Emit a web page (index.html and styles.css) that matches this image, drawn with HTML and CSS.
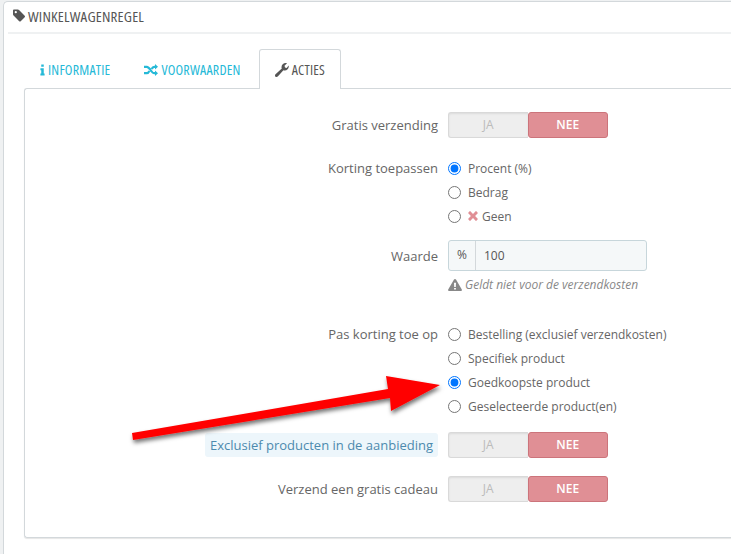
FILE: index.html
```html
<!DOCTYPE html>
<html lang="nl">
  <head>
    <meta charset="UTF-8" />
    <title>Winkelwagenregel</title>
    <link rel="stylesheet" href="styles.css">
  </head>
  <body>
    <div class="panel">
      <h3 class="panel-heading">
        <svg class="icon" viewBox="0 0 14 14"><path fill="#555" d="M0 1.5Q0 .5 1 .5H5.2Q5.9 .5 6.5 1.1L12.6 7.2Q13.4 8 12.6 8.8L8.3 13.1Q7.5 13.9 6.7 13.1L.6 7Q0 6.4 0 5.7ZM3 2.2A1.2 1.2 0 1 0 3 4.6A1.2 1.2 0 1 0 3 2.2Z" fill-rule="evenodd"/></svg>
        <span class="condensed">Winkelwagenregel</span>
      </h3>

      <ul class="tabs">
        <li class="tab">
          <svg class="icon icon-info" viewBox="0 0 6 13"><path fill="#25b9d7" d="M1.5 0H4.5V2.5H1.5ZM.5 4.5H4.5V10.8H5.5V13H.5V10.8H1.5V6.7H.5Z"/></svg>
          <span class="condensed">Informatie</span>
        </li>
        <li class="tab">
          <svg class="icon icon-random" viewBox="0 0 14 12"><path fill="none" stroke="#25b9d7" stroke-width="2.2" d="M0 2.8H2.8C6 2.8 7 9.2 10.2 9.2H11.5M0 9.2H2.8C4 9.2 4.8 8.2 5.4 7M7.6 5C8.2 3.8 9 2.8 10.2 2.8H11.5"/><path fill="#25b9d7" d="M11 0L14 2.8L11 5.6ZM11 6.4L14 9.2L11 12Z"/></svg>
          <span class="condensed">Voorwaarden</span>
        </li>
        <li class="tab active">
          <svg class="icon icon-wrench" viewBox="0 0 14 14"><path fill="#555" d="M13.8 3.2C13.8 5.6 12 7.4 9.7 7.4C9.2 7.4 8.8 7.3 8.4 7.2L3 13.2C2.2 14.1 .9 14.1 .3 13.4C-.3 12.8 -.1 11.6 .8 10.9L6.8 5.6C6.6 5.2 6.5 4.7 6.5 4.2C6.5 1.9 8.4 0 10.7 0C11.1 0 11.6 .1 12 .3L9.5 2.7L10 4.5L11.7 5L13.6 2.4C13.7 2.7 13.8 2.9 13.8 3.2Z"/></svg>
          <span class="condensed">Acties</span>
        </li>
      </ul>

      <div class="tab-content">
        <form class="form">
          <div class="form-row row-switch">
            <label class="form-label">Gratis verzending</label>
            <div class="switch"><span class="switch-off">JA</span><span class="switch-on">NEE</span></div>
          </div>

          <div class="form-row row-radios">
            <label class="form-label">Korting toepassen</label>
            <div class="radios">
              <label class="radio"><input type="radio" name="apply" checked> Procent (%)</label>
              <label class="radio"><input type="radio" name="apply"> Bedrag</label>
              <label class="radio"><input type="radio" name="apply">
                <svg class="icon icon-times" viewBox="0 0 11 11"><path fill="#e08f95" d="M2.6 .3L5.5 3.2L8.4 .3Q8.8 -.1 9.2 .3L10.7 1.8Q11.1 2.2 10.7 2.6L7.8 5.5L10.7 8.4Q11.1 8.8 10.7 9.2L9.2 10.7Q8.8 11.1 8.4 10.7L5.5 7.8L2.6 10.7Q2.2 11.1 1.8 10.7L.3 9.2Q-.1 8.8 .3 8.4L3.2 5.5L.3 2.6Q-.1 2.2 .3 1.8L1.8 .3Q2.2 -.1 2.6 .3Z"/></svg>
                Geen</label>
            </div>
          </div>

          <div class="form-row row-input">
            <label class="form-label">Waarde</label>
            <div class="input-block">
              <div class="input-group"><span class="input-addon">%</span><input class="input" type="text" value="100"></div>
              <p class="help">
                <svg class="icon icon-warning" viewBox="0 0 14 12"><path fill="#888" fill-rule="evenodd" d="M7 0Q7.6 0 8 .6L13.8 10.6Q14.2 11.9 13 12H1Q-.2 11.9 .2 10.6L6 .6Q6.4 0 7 0ZM6 3.8L6.2 8H7.8L8 3.8ZM6.1 9V10.6H7.9V9Z"/></svg>
                Geldt niet voor de verzendkosten
              </p>
            </div>
          </div>

          <div class="form-row row-radios row-apply">
            <label class="form-label">Pas korting toe op</label>
            <div class="radios">
              <label class="radio"><input type="radio" name="target"> Bestelling (exclusief verzendkosten)</label>
              <label class="radio"><input type="radio" name="target"> Specifiek product</label>
              <label class="radio"><input type="radio" name="target" checked> Goedkoopste product</label>
              <label class="radio"><input type="radio" name="target"> Geselecteerde product(en)</label>
            </div>
          </div>

          <div class="form-row row-switch">
            <label class="form-label"><span class="hint">Exclusief producten in de aanbieding</span></label>
            <div class="switch"><span class="switch-off">JA</span><span class="switch-on">NEE</span></div>
          </div>

          <div class="form-row row-switch">
            <label class="form-label">Verzend een gratis cadeau</label>
            <div class="switch"><span class="switch-off">JA</span><span class="switch-on">NEE</span></div>
          </div>
        </form>
      </div>
    </div>

    <!-- Red annotation arrow drawn over the form -->
    <svg class="arrow" viewBox="0 0 731 554">
      <defs>
        <filter id="arrow-shadow" x="-10%" y="-30%" width="120%" height="160%">
          <feDropShadow dx="1" dy="3" stdDeviation="2" flood-color="#000" flood-opacity="0.55"/>
        </filter>
      </defs>
      <path fill="#f00" filter="url(#arrow-shadow)" d="M132 433L388 389L386 376L440 385L391 411L390 398L133 440Z"/>
    </svg>
  </body>
</html>
```

FILE: styles.css
```css
:root {
  --bg-color: #eff1f2;
  --border-color: #d3d8db;
  --text-color: #666;
  --accent-color: #25b9d7;
}
html,
body {
  height: 100%;
}
body {
  margin: 0;
  padding: 1px 0 0 3px;
  box-sizing: border-box;
  position: relative;
  overflow: hidden;
  background: var(--bg-color);
  font-family: "Open Sans", sans-serif;
  font-size: 12px;
  color: var(--text-color);
}
.panel {
  box-sizing: border-box;
  height: 100%;
  padding: 0 0 0 4px;
  background: #fff;
  border: 1px solid var(--border-color);
  border-width: 1px 0 0 1px;
  border-radius: 5px 0 0 0;
}
.condensed {
  font-family: "Open Sans", sans-serif;
  font-stretch: 75%;
  letter-spacing: 0.2px;
  text-transform: uppercase;
}
.panel-heading {
  display: flex;
  align-items: center;
  gap: 2px;
  box-sizing: border-box;
  height: 32px;
  margin: 0;
  padding: 0 0 3px 5px;
  border-bottom: 2px solid var(--bg-color);
  font-size: 15px;
  font-weight: 400;
  color: #555;
}
.icon {
  display: inline-block;
  flex: none;
}
.panel-heading .icon {
  width: 13px;
  height: 13px;
}
.tabs {
  display: flex;
  gap: 2px;
  list-style: none;
  margin: 15px 0 0 16px;
  padding: 0;
  height: 39px;
}
.tab {
  display: flex;
  align-items: center;
  gap: 3px;
  box-sizing: border-box;
  height: 40px;
  padding: 0 15px;
  border: 1px solid transparent;
  border-bottom: 0;
  font-size: 14px;
  color: var(--accent-color);
}
.tab.active {
  position: relative;
  z-index: 1;
  background: #fff;
  border-color: var(--border-color);
  border-radius: 3px 3px 0 0;
  color: #555;
}
.icon-info {
  width: 5px;
  height: 12px;
}
.icon-random {
  width: 14px;
  height: 12px;
}
.icon-wrench {
  width: 14px;
  height: 14px;
}
.tab-content {
  box-sizing: border-box;
  height: 450px;
  margin-left: 16px;
  padding: 23px 0 0;
  border: 1px solid var(--border-color);
  border-right: 0;
  border-radius: 3px 0 0 3px;
  box-shadow: 0 1px 1px rgba(0, 0, 0, 0.1);
}
.form-row {
  display: grid;
  grid-template-columns: 413px 1fr;
  column-gap: 10px;
}
.form-label {
  text-align: right;
  font-size: 13px;
  line-height: 26px;
}
.row-switch {
  height: 26px;
  align-items: center;
  margin-bottom: 18px;
}
.switch {
  display: flex;
  box-sizing: border-box;
  width: 160px;
  height: 26px;
  font-size: 12px;
  line-height: 24px;
  text-align: center;
}
.switch-off,
.switch-on {
  flex: 1;
  box-sizing: border-box;
  border: 1px solid #d9d9d9;
}
.switch-off {
  background: #eee;
  color: #bbb;
  border-radius: 3px 0 0 3px;
  border-right: 0;
  box-shadow: inset 0 1px 2px rgba(0, 0, 0, 0.08);
}
.switch-on {
  background: #e08f95;
  border-color: #cc747b;
  color: #fff;
  font-weight: 600;
  border-radius: 3px;
}
.radios {
  display: flex;
  flex-direction: column;
}
.radio {
  display: flex;
  align-items: center;
  gap: 7px;
  height: 24px;
  font-size: 12px;
}
.radio input {
  flex: none;
  width: 13px;
  height: 13px;
  margin: 0;
}
.radio .icon-times {
  width: 10px;
  height: 10px;
  margin-right: -3px;
}
.row-radios .form-label {
  line-height: 24px;
}
.row-radios {
  margin-bottom: 12px;
}
.input-group {
  display: flex;
  box-sizing: border-box;
  width: 199px;
  height: 31px;
  background: #f5f8f9;
  border: 1px solid #c7d6db;
  border-radius: 3px;
}
.input-addon {
  width: 26px;
  border-right: 1px solid var(--border-color);
  text-align: center;
  line-height: 27px;
  font-size: 12px;
  color: #555;
}
.input {
  flex: 1;
  min-width: 0;
  padding: 0 8px;
  border: 0;
  background: transparent;
  font-family: inherit;
  font-size: 12px;
  color: #555;
}
.row-input .form-label {
  line-height: 33px;
}
.help {
  display: flex;
  align-items: center;
  gap: 3px;
  margin: 6px 0 0;
  font-size: 12px;
  font-style: italic;
  color: #888;
  line-height: 15px;
}
.icon-warning {
  width: 14px;
  height: 12px;
}
.row-input {
  margin-bottom: 30px;
}
.row-apply {
  margin-bottom: 14px;
}
.hint {
  padding: 3px 5px;
  background: #edf6fb;
  border-radius: 3px;
  color: #4c8aae;
}
.arrow {
  position: absolute;
  top: 0;
  left: 0;
  width: 731px;
  height: 554px;
  pointer-events: none;
}
```
